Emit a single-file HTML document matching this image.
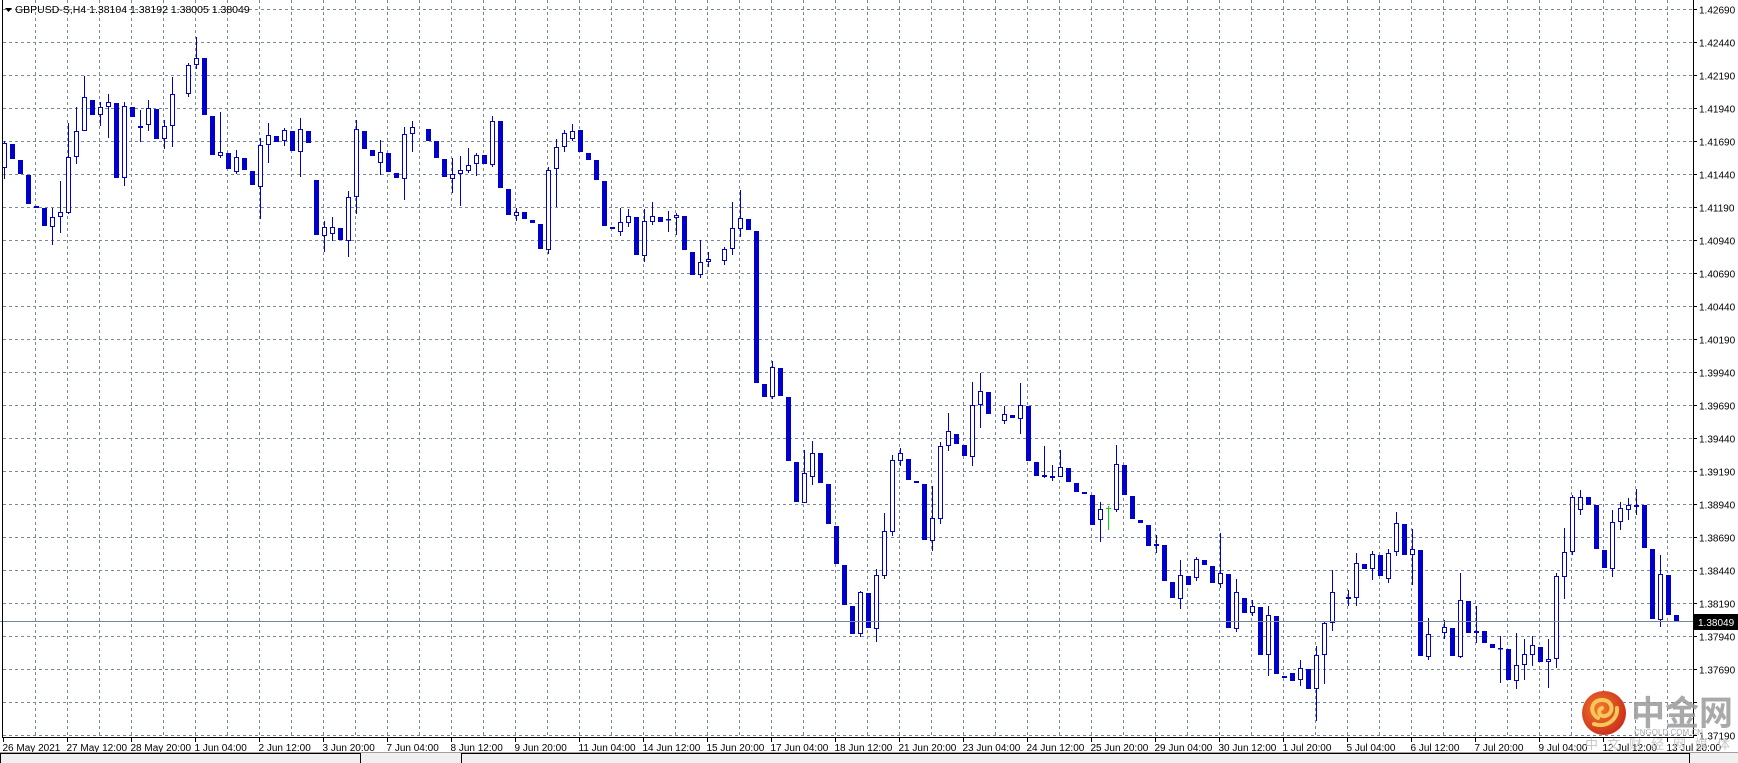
<!DOCTYPE html>
<html><head><meta charset="utf-8">
<style>
html,body{margin:0;padding:0;background:#fff;width:1738px;height:763px;overflow:hidden}
svg{display:block}
text{font-family:"Liberation Sans","Noto Sans CJK SC",sans-serif}
</style></head>
<body>
<svg id="c" width="1738" height="763" xmlns="http://www.w3.org/2000/svg">
<rect width="1738" height="763" fill="#fff"/>
<g id="grid"></g>
<g id="candles"></g>
<line x1="0" y1="621.5" x2="1693" y2="621.5" stroke="#778899" stroke-width="1"/>
<line x1="2.5" y1="0" x2="2.5" y2="737" stroke="#000"/>
<line x1="1693.5" y1="0" x2="1693.5" y2="737.5" stroke="#000"/>
<line x1="2" y1="737.5" x2="1694" y2="737.5" stroke="#000"/>
<g id="axes" font-size="10" fill="#000"></g>
<rect x="1694" y="614" width="44" height="16" fill="#000"/>
<text x="1698" y="626" font-size="10" fill="#fff">1.38049</text>
<path d="M5 8 L12 8 L8.5 12 Z" fill="#000"/>
<text x="15" y="13" font-size="10.5" fill="#000">GBPUSD-S,H4  1.38104 1.38192 1.38005 1.38049</text>
<rect x="0" y="752" width="1738" height="11" fill="#f0f0f0"/>
<line x1="0" y1="752.5" x2="1738" y2="752.5" stroke="#a0a0a0"/>
<rect x="0.5" y="753.5" width="360" height="12" fill="none" stroke="#000"/>
<rect x="461.5" y="753.5" width="1228" height="12" fill="none" stroke="#000"/>
<defs><radialGradient id="wg" cx="0.4" cy="0.4" r="0.7"><stop offset="0" stop-color="#f27a2a"/><stop offset="1" stop-color="#c9261a"/></radialGradient></defs>
<circle cx="1604" cy="713" r="22" fill="url(#wg)"/>
<path d="M1598 718 C1588 712 1592 699 1603 700 C1614 701 1614 714 1605 716 C1599 717 1597 710 1602 708 M1594 724 C1606 728 1618 720 1617 708" fill="none" stroke="#f6c85a" stroke-width="4" stroke-linecap="round"/>
<text x="1631" y="725" font-size="34" font-weight="bold" fill="#9a9a9a" fill-opacity="0.85">中金网</text>
<text x="1634" y="735" font-size="8" fill="#aaa">CNGOLD.COM.CN</text>
<text x="1585" y="749" font-size="13" fill="#c8c8c8" letter-spacing="9">中文财经网媒体</text>
</svg>
<script>
(function(){
var NS="http://www.w3.org/2000/svg";
function el(p,n,a){var e=document.createElementNS(NS,n);for(var k in a)e.setAttribute(k,a[k]);p.appendChild(e);return e;}
var g=document.getElementById('grid');
for(var k=0;k<52;k++){var x=35.5+32*k;el(g,'line',{x1:x,y1:0,x2:x,y2:737,stroke:'#778899','stroke-dasharray':'3,3'});}
for(var k=0;k<23;k++){var y=9.5+33*k;el(g,'line',{x1:3,y1:y,x2:1693,y2:y,stroke:'#778899','stroke-dasharray':'3,3'});}
var ax=document.getElementById('axes');
for(var k=0;k<23;k++){var y=9.5+33*k;var p=(1.42690-0.0025*k).toFixed(5);
 el(ax,'line',{x1:1693,y1:y,x2:1697,y2:y,stroke:'#000'});
 if(k==21)continue;
 var t=el(ax,'text',{x:1699,y:y+4});t.textContent=p;}
var labs=["26 May 2021","27 May 12:00","28 May 20:00","1 Jun 04:00","2 Jun 12:00","3 Jun 20:00","7 Jun 04:00","8 Jun 12:00","9 Jun 20:00","11 Jun 04:00","14 Jun 12:00","15 Jun 20:00","17 Jun 04:00","18 Jun 12:00","21 Jun 20:00","23 Jun 04:00","24 Jun 12:00","25 Jun 20:00","29 Jun 04:00","30 Jun 12:00","1 Jul 20:00","5 Jul 04:00","6 Jul 12:00","7 Jul 20:00","9 Jul 04:00","12 Jul 12:00","13 Jul 20:00"];
for(var k=0;k<labs.length;k++){var x=3.5+64*k;el(ax,'line',{x1:x,y1:737,x2:x,y2:742,stroke:'#000'});var t=el(ax,'text',{x:x-1,y:751});t.textContent=labs[k];}
var D=[[168,143,141,179],[144,159],[160,174],[175,204],[206,208],[208,226],[227,217,208,245],[217,212,181,233],[213,157,123,214],[157,131,107,164],
[131,97,76,131],[100,115],[115,107,102,126],[107,102,94,138],[103,178],[178,106,102,186],[107,117],[126,128,110,142],[125,108,100,131],[109,139],
[139,126,120,149],[126,94,77,147],null,[94,65,63,97],[65,58,37,69],[58,115],[116,155],[156,152,112,158],[153,169],[172,157,150,174],
[158,170],[171,185],[187,145,138,219],[145,135,123,163],[136,142],[141,130,128,146],[131,151],[152,129,118,177],[131,143],[180,235],
[236,227,221,252],[234,227,217,241],[228,240],[241,197,191,257],[197,129,120,214],[131,149],[150,156],[163,152,140,175],[153,172],[173,178],
[179,134,127,200],[134,127,121,152],null,[129,141],[141,158],[159,177],[179,174,158,193],[174,170,156,206],[171,165,148,173],[164,155,153,176],
[155,164],[165,121,116,167],[121,188],[189,215],[216,212,208,221],[212,219],[220,223],[224,249],[250,170,167,254],[169,147,139,207],
[147,133,130,152],[139,131,124,141],[130,152],[153,160],[160,180],[181,226],[227,229],[232,222,208,236],[223,216,209,227],[217,255],
[256,221,209,262],[222,216,202,225],[217,222],[219,219,211,232],[218,215,213,235],[216,250],[252,275],[275,262,240,278],[262,259,252,267],null,
[261,249,247,265],[249,228,202,255],[229,218,190,237],[219,230],[231,383],[384,397],[397,367,361,399],[368,396],[397,461],[462,502],
[503,473,450,503],[477,453,441,485],[453,483],[484,524],[526,564],[565,605],[606,634],[634,592,591,637],[593,628],[629,575,569,642],
[576,531,513,579],[532,460,455,536],[461,453,448,466],[459,480],[481,483],[484,540],[541,518,486,551],[519,446,442,524],[446,431,413,451],[434,444],
[445,456],[457,405,382,466],[405,391,373,428],[392,414],null,[421,414,406,424],[415,418],[419,405,383,434],[406,461],[462,476],
[475,477,446,478],[478,476,465,481],[477,467,450,477],[468,482],[483,492],[492,494],[495,525],[520,509,502,542],'G',[510,464,445,512],
[465,495],[496,519],[520,523],[525,546],[546,544,535,553],[545,581],[582,598],[599,575,560,609],[576,585],[578,559,557,581],
[560,565],[566,583],[584,573,533,588],[574,628],[629,592,579,632],[598,613],[613,606,600,616],[607,655],[655,615,606,676],[616,674],
[676,678],[673,681],[680,668,660,686],[669,689],[689,655,646,721],[655,623,622,684],[623,592,570,631],null,[599,597,590,606],[598,563,553,606],
[564,569],[569,554,551,580],[555,576],[579,553,549,583],[552,523,512,556],[524,555],[555,549,529,585],[550,656],[657,634,618,660],null,
[633,627,620,639],[628,656],[657,600,573,658],[601,633],[633,631,606,643],[631,643],[644,648],[648,648,636,683],[649,680],[681,665,633,689],
[665,654,639,680],[655,645,636,666],[647,662],[662,659,639,688],[659,576,573,668],[577,552,528,599],[552,497,495,555],[510,497,490,515],[497,505],[505,549],
[550,568],[569,522,510,577],[522,508,502,530],[510,505,498,520],[507,505,489,515],[505,548],[549,619],[620,574,555,627],[575,615],[615,622]];
var cg=document.getElementById('candles');var C='#0000cd';
for(var i=0;i<D.length;i++){var d=D[i];if(!d)continue;var cx=4+8*i;
 if(d==='G'){el(cg,'rect',{x:cx,y:506,width:1,height:24,fill:'#00dd00'});el(cg,'rect',{x:cx-2,y:508,width:5,height:1,fill:'#00dd00'});continue;}
 var o=d[0],c=d[1],h=d.length>2?d[2]:Math.min(o,c),l=d.length>2?d[3]:Math.max(o,c);
 var top=Math.min(o,c),bot=Math.max(o,c);
 if(h<top)el(cg,'rect',{x:cx,y:h,width:1,height:top-h,fill:C});
 if(l>bot)el(cg,'rect',{x:cx,y:bot,width:1,height:l-bot,fill:C});
 if(o<c){el(cg,'rect',{x:cx-2,y:top,width:5,height:Math.max(1,bot-top),fill:C});}
 else{ if(bot-top<2){el(cg,'rect',{x:cx-2,y:top,width:5,height:1.5,fill:C});}
   else el(cg,'rect',{x:cx-1.5,y:top+0.5,width:4,height:bot-top-1,fill:'#fff',stroke:C,'stroke-width':1});}
}
})();
</script>
</body></html>
